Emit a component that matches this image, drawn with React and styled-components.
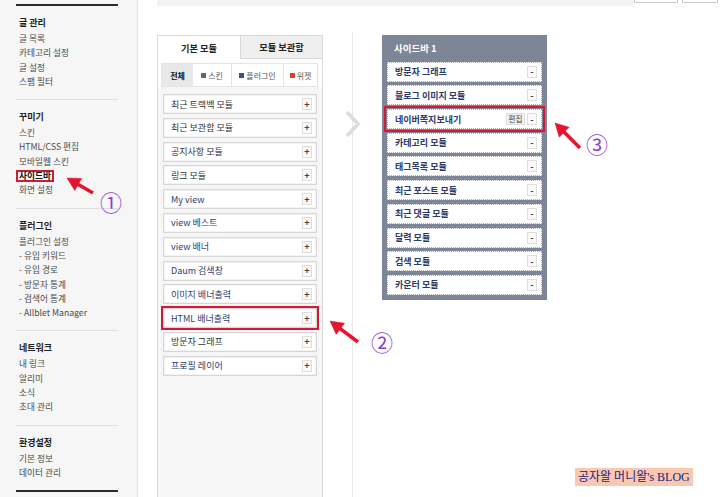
import React from 'react';
import styled, { createGlobalStyle } from 'styled-components';

const Global = createGlobalStyle`
  html, body { margin: 0; padding: 0; background: #fff; }
  body { font-family: "Noto Sans CJK KR", "Noto Sans", sans-serif; }
  #root { width: 720px; height: 497px; overflow: hidden; }
`;

const Page = styled.div`
  position: relative;
  display: flex;
  width: 720px;
  height: 497px;
  overflow: hidden;
  background: #fff;
`;

/* ---------- left navigation ---------- */
const Nav = styled.nav`
  width: 138px;
  flex: none;
  box-sizing: border-box;
  background: #f6f6f6;
  border-right: 1px solid #e2e2e2;
  padding: 4px 0 0 16px;
`;

const NavInner = styled.div`
  width: 102px;
  border-top: 2px solid #2a2a2a;
  border-bottom: 2px solid #2a2a2a;
`;

const NavSection = styled.section`
  padding: 10px 0;
  & + & { border-top: 1px solid #dedede; }
`;

const NavTitle = styled.div`
  font-size: 9px;
  font-weight: bold;
  line-height: 14.3px;
  color: #1e1e1e;
  padding-left: 3px;
  margin-bottom: 1.7px;
`;

const NavItem = styled.div`
  font-size: 8.7px;
  line-height: 14.3px;
  color: #4a4a4a;
  padding-left: 3px;
  white-space: nowrap;
`;

const ActiveMark = styled.span`
  display: inline-block;
  margin-left: -3px;
  padding: 0 1px;
  border: 2px solid #d11a36;
  line-height: 8px;
  font-weight: bold;
  color: #111;
`;

/* ---------- main ---------- */
const Main = styled.main`
  flex: 1;
  display: flex;
  flex-direction: column;
  padding-left: 19px;
`;

const TopBar = styled.div`
  display: flex;
  align-items: flex-end;
  height: 6px;
`;

const TopBand = styled.div`
  width: 476px;
  height: 6px;
  background: #f3f3f3;
`;

const TopButton = styled.div`
  box-sizing: border-box;
  width: ${p => p.$w}px;
  margin-left: ${p => p.$ml}px;
  height: 12px;
  margin-bottom: 3px;
  border: 1px solid #c9c9c9;
  background: #fff;
`;

const Workspace = styled.div`
  flex: 1;
  display: flex;
  align-items: flex-start;
  margin-top: 26px;
`;

/* ---------- module panel ---------- */
const ModulePanel = styled.div`
  align-self: stretch;
  width: 166px;
  box-sizing: border-box;
  margin-top: 3px;
  display: flex;
  flex-direction: column;
  border: 1px solid #dadada;
  border-bottom: none;
  background: #f6f6f6;
`;

const Tabs = styled.div`
  display: grid;
  grid-template-columns: 83px 1fr;
  height: 23px;
`;

const Tab = styled.div`
  display: flex;
  align-items: center;
  justify-content: center;
  font-size: 9.2px;
  font-weight: bold;
  color: #222;
  background: ${p => (p.$active ? '#fff' : '#efefef')};
  border-right: ${p => (p.$active ? '1px solid #dadada' : 'none')};
  border-bottom: ${p => (p.$active ? 'none' : '1px solid #dadada')};
`;

const FilterArea = styled.div`
  background: #fff;
  padding: 4px 4px 0 3px;
`;

const FilterBar = styled.div`
  display: flex;
  height: 24px;
  box-sizing: border-box;
  border: 1px solid #e4e4e4;
`;

const FilterCell = styled.div`
  width: ${p => p.$w}px;
  flex: ${p => (p.$w ? 'none' : '1')};
  display: flex;
  align-items: center;
  justify-content: center;
  gap: 2px;
  font-size: 8px;
  color: ${p => (p.$on ? '#111' : '#555')};
  font-weight: ${p => (p.$on ? 'bold' : 'normal')};
  background: ${p => (p.$on ? '#e8e8e8' : '#fff')};
  border-left: ${p => (p.$line ? '1px solid #e4e4e4' : 'none')};
`;

const Swatch = styled.span`
  width: 5px;
  height: 5px;
  background: ${p => p.$c};
`;

const ModuleList = styled.div`
  display: flex;
  flex-direction: column;
  gap: 3.8px;
  padding: 7px 5px 0 5px;
`;

const ModuleItem = styled.div`
  display: flex;
  align-items: center;
  height: 20px;
  box-sizing: border-box;
  background: #fff;
  border: 1px solid #d6d6d6;
  box-shadow: inset 0 0 0 1px #f3f3f3;
  padding: 0 4px 0 7px;
  outline: ${p => (p.$mark ? '2px solid #d11a36' : 'none')};
`;

const ModuleName = styled.span`
  flex: 1;
  font-size: 9px;
  color: ${p => (p.$plugin ? '#2e3d6e' : '#333')};
  white-space: nowrap;
`;

const SmallBtn = styled.span`
  display: flex;
  align-items: center;
  justify-content: center;
  box-sizing: border-box;
  width: ${p => p.$w || 10}px;
  height: 12px;
  margin-left: 2px;
  border: 1px solid #dedede;
  background: ${p => (p.$gray ? '#efefef' : '#fafafa')};
  font-size: ${p => (p.$gray ? 7.5 : 9)}px;
  font-weight: ${p => (p.$gray ? 'normal' : 'bold')};
  color: #444;
  line-height: 1;
`;

/* ---------- divider ---------- */
const Divider = styled.div`
  position: relative;
  align-self: stretch;
  width: 1px;
  margin-left: 29px;
  background: #e7e7e7;
`;

const Chevron = styled.svg`
  position: absolute;
  left: -8px;
  top: 77px;
`;

/* ---------- sidebar box ---------- */
const SidebarBox = styled.div`
  width: 165px;
  box-sizing: border-box;
  margin: 3px 0 0 29px;
  padding: 0 5px 5px;
  background: #7c8696;
`;

const SidebarTitle = styled.div`
  height: 26.7px;
  display: flex;
  align-items: center;
  padding-left: 7px;
  font-size: 9.5px;
  font-weight: bold;
  color: #fff;
`;

const SidebarList = styled.div`
  display: flex;
  flex-direction: column;
  gap: 3.7px;
`;

const SidebarItem = styled.div`
  display: flex;
  align-items: center;
  height: 20px;
  box-sizing: border-box;
  background: #fff;
  border: 1px dotted #aab0bb;
  padding: 0 4px 0 7px;
  outline: ${p => (p.$mark ? '2px solid #d11a36' : 'none')};
  outline-offset: 1px;
`;

const SidebarName = styled.span`
  flex: 1;
  font-size: 9px;
  font-weight: bold;
  color: #2c3a68;
  white-space: nowrap;
`;

/* ---------- overlays ---------- */
const Annotations = styled.svg`
  position: absolute;
  left: 0;
  top: 0;
  pointer-events: none;
`;

const Circled = styled.span`
  position: absolute;
  left: ${p => p.$x}px;
  top: ${p => p.$y}px;
  font-family: "Noto Sans CJK KR", "DejaVu Sans", sans-serif;
  font-size: 22px;
  line-height: 1;
  color: #8f3fcf;
`;

const Stamp = styled.div`
  position: absolute;
  left: 575px;
  top: 468px;
  padding: 0 3px;
  height: 18px;
  line-height: 18px;
  background: #f8c8b2;
  color: #1c1c7c;
  font-family: "Liberation Serif", "Noto Sans CJK KR", serif;
  font-size: 12px;
  white-space: nowrap;
`;

const navData = [
  { title: '글 관리', items: ['글 목록', '카테고리 설정', '글 설정', '스팸 필터'] },
  { title: '꾸미기', items: ['스킨', 'HTML/CSS 편집', '모바일웹 스킨', '*사이드바', '화면 설정'] },
  {
    title: '플러그인',
    items: ['플러그인 설정', '- 유입 키워드', '- 유입 경로', '- 방문자 통계', '- 검색어 통계', '- Allblet Manager'],
  },
  { title: '네트워크', items: ['내 링크', '알리미', '소식', '초대 관리'] },
  { title: '환경설정', items: ['기본 정보', '데이터 관리'] },
];

const modules = [
  ['최근 트랙백 모듈', false],
  ['최근 보관함 모듈', false],
  ['공지사항 모듈', false],
  ['링크 모듈', false],
  ['My view', true],
  ['view 베스트', true],
  ['view 배너', true],
  ['Daum 검색창', true],
  ['이미지 배너출력', true],
  ['HTML 배너출력', true, true],
  ['방문자 그래프', false],
  ['프로필 레이어', true],
];

const sidebarModules = [
  '방문자 그래프',
  '블로그 이미지 모듈',
  '네이버쪽지보내기',
  '카테고리 모듈',
  '태그목록 모듈',
  '최근 포스트 모듈',
  '최근 댓글 모듈',
  '달력 모듈',
  '검색 모듈',
  '카운터 모듈',
];

function Arrow({ tip, tail }) {
  const dx = tip[0] - tail[0];
  const dy = tip[1] - tail[1];
  const len = Math.hypot(dx, dy);
  const ux = dx / len;
  const uy = dy / len;
  const hl = 13;
  const hw = 7;
  const bx = tip[0] - ux * hl;
  const by = tip[1] - uy * hl;
  const nx = -uy;
  const ny = ux;
  const pts = `${tip[0]},${tip[1]} ${bx + nx * hw},${by + ny * hw} ${bx - nx * hw},${by - ny * hw}`;
  return (
    <g fill="#e5152f" stroke="#e5152f">
      <line x1={tail[0]} y1={tail[1]} x2={bx + ux * 2} y2={by + uy * 2} strokeWidth="3.6" />
      <polygon points={pts} strokeWidth="0.5" strokeLinejoin="round" />
    </g>
  );
}

export default function App() {
  return (
    <Page>
      <Global />
      <Nav>
        <NavInner>
          {navData.map(sec => (
            <NavSection key={sec.title}>
              <NavTitle>{sec.title}</NavTitle>
              {sec.items.map(it =>
                it.startsWith('*') ? (
                  <NavItem key={it}>
                    <ActiveMark>{it.slice(1)}</ActiveMark>
                  </NavItem>
                ) : (
                  <NavItem key={it}>{it}</NavItem>
                )
              )}
            </NavSection>
          ))}
        </NavInner>
      </Nav>

      <Main>
        <TopBar>
          <TopBand />
          <TopButton $w={44} $ml={1} />
          <TopButton $w={36} $ml={4} />
        </TopBar>

        <Workspace>
          <ModulePanel>
            <Tabs>
              <Tab $active>기본 모듈</Tab>
              <Tab>모듈 보관함</Tab>
            </Tabs>
            <FilterArea>
              <FilterBar>
                <FilterCell $w={31} $on>전체</FilterCell>
                <FilterCell $w={38}>
                  <Swatch $c="#666" />스킨
                </FilterCell>
                <FilterCell $w={51} $line>
                  <Swatch $c="#3c4f96" />플러그인
                </FilterCell>
                <FilterCell $line>
                  <Swatch $c="#d4402a" />위젯
                </FilterCell>
              </FilterBar>
            </FilterArea>
            <ModuleList>
              {modules.map(([name, plugin, mark]) => (
                <ModuleItem key={name} $mark={mark}>
                  <ModuleName $plugin={plugin}>{name}</ModuleName>
                  <SmallBtn>+</SmallBtn>
                </ModuleItem>
              ))}
            </ModuleList>
          </ModulePanel>

          <Divider>
            <Chevron width="18" height="30" viewBox="0 0 18 30">
              <polyline points="3,3 14,15 3,27" fill="none" stroke="#dedede" strokeWidth="4" />
            </Chevron>
          </Divider>

          <SidebarBox>
            <SidebarTitle>사이드바 1</SidebarTitle>
            <SidebarList>
              {sidebarModules.map(name => (
                <SidebarItem key={name} $mark={name === '네이버쪽지보내기'}>
                  <SidebarName>{name}</SidebarName>
                  {name === '네이버쪽지보내기' && (
                    <SmallBtn $w={19} $gray>
                      편집
                    </SmallBtn>
                  )}
                  <SmallBtn>-</SmallBtn>
                </SidebarItem>
              ))}
            </SidebarList>
          </SidebarBox>
        </Workspace>
      </Main>

      <Annotations width="720" height="497" viewBox="0 0 720 497">
        <Arrow tip={[67, 178]} tail={[93, 193]} />
        <Arrow tip={[330, 321]} tail={[358, 342]} />
        <Arrow tip={[555, 123]} tail={[580, 148]} />
      </Annotations>
      <Circled $x={100} $y={190}>①</Circled>
      <Circled $x={371} $y={330}>②</Circled>
      <Circled $x={586} $y={132}>③</Circled>

      <Stamp>공자왈 머니왈's BLOG</Stamp>
    </Page>
  );
}
